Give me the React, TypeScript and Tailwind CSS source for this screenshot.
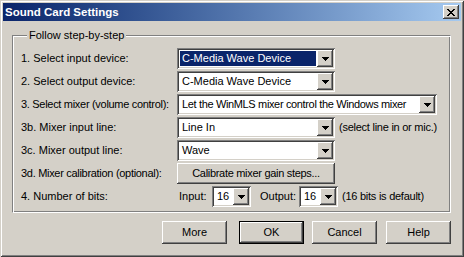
import React from 'react';

const raised =
  'shadow-[inset_-1px_-1px_#404040,inset_1px_1px_#ffffff,inset_-2px_-2px_#808080,inset_2px_2px_#d4d0c8]';
const sunken =
  'shadow-[inset_1px_1px_#808080,inset_-1px_-1px_#ffffff,inset_2px_2px_#404040,inset_-2px_-2px_#d4d0c8]';

const DownArrow = () => (
  <svg width="7" height="4" viewBox="0 0 7 4" shapeRendering="crispEdges">
    <rect x="0" y="0" width="7" height="1" fill="#000" />
    <rect x="1" y="1" width="5" height="1" fill="#000" />
    <rect x="2" y="2" width="3" height="1" fill="#000" />
    <rect x="3" y="3" width="1" height="1" fill="#000" />
  </svg>
);

const CloseGlyph = () => {
  const rows = ['11000011', '01100110', '00111100', '00011000', '00111100', '01100110', '11000011'];
  return (
    <svg width="8" height="7" viewBox="0 0 8 7" shapeRendering="crispEdges">
      {rows.map((r, y) =>
        r.split('').map((c, x) => (c === '1' ? <rect key={`${x}-${y}`} x={x} y={y} width="1" height="1" fill="#000" /> : null))
      )}
    </svg>
  );
};

interface ComboProps {
  value: string;
  width: string;
  selected?: boolean;
  tight?: boolean;
}

const Combo: React.FC<ComboProps> = ({ value, width, selected, tight }) => (
  <div className={`${width} h-[21px] bg-white p-[2px] flex ${sunken}`}>
    <div className="flex-1 min-w-0 p-[1px] flex">
      <span
        className={`flex-1 flex items-center pl-[2px] whitespace-nowrap overflow-hidden ${tight ? 'tracking-[-0.35px]' : ''} ${
          selected ? 'bg-[#0a246a] text-white' : 'text-black'
        }`}
      >
        {value}
      </span>
    </div>
    <div className={`w-[16px] h-[17px] bg-[#d4d0c8] flex items-center justify-center pl-[1px] ${raised}`}>
      <DownArrow />
    </div>
  </div>
);

const Row: React.FC<{ label: string; tight?: boolean; children: React.ReactNode }> = ({ label, tight, children }) => (
  <div className="h-[21px] flex items-center">
    <span className={`w-[156px] whitespace-nowrap ${tight ? 'tracking-[-0.3px]' : ''}`}>{label}</span>
    {children}
  </div>
);

const Button: React.FC<{ label: string; isDefault?: boolean; className?: string }> = ({ label, isDefault, className = '' }) =>
  isDefault ? (
    <div className={`w-[65px] h-[23px] border border-black ${className}`}>
      <div className={`w-full h-full flex items-center justify-center ${raised}`}>{label}</div>
    </div>
  ) : (
    <div className={`w-[65px] h-[23px] flex items-center justify-center ${raised} ${className}`}>{label}</div>
  );

export default function App() {
  return (
    <div className="w-[464px] h-[257px] bg-[#d4d0c8] p-[3px] flex flex-col font-['Liberation_Sans',Arial,sans-serif] text-[11px] leading-[13px] text-black shadow-[inset_1px_1px_#d4d0c8,inset_-1px_-1px_#404040,inset_2px_2px_#ffffff,inset_-2px_-2px_#808080]">
      <div className="h-[18px] flex items-center px-[2px] bg-linear-to-r from-[#0a246a] to-[#a6caf0]">
        <span className="flex-1 text-white font-bold text-[11.5px]">Sound Card Settings</span>
        <div className={`w-[16px] h-[14px] bg-[#d4d0c8] flex items-center justify-center ${raised}`}>
          <CloseGlyph />
        </div>
      </div>

      <div className="flex-1 flex flex-col pl-[9px] pr-[10px]">
        <fieldset className="mt-[8px] border border-t-[#808080] border-l-[#808080] border-b-white border-r-white shadow-[inset_1px_1px_#ffffff,inset_-1px_-1px_#808080] pl-[8px] pt-[6px] pb-[5px]">
          <legend className="ml-[6px] px-[2px] bg-[#d4d0c8]">Follow step-by-step</legend>
          <div className="flex flex-col gap-[2px]">
            <Row label="1. Select input device:">
              <Combo value="C-Media Wave Device" width="w-[158px]" selected />
            </Row>
            <Row label="2. Select output device:">
              <Combo value="C-Media Wave Device" width="w-[158px]" />
            </Row>
            <Row label="3. Select mixer (volume control):" tight>
              <Combo value="Let the WinMLS mixer control the Windows mixer" width="w-[260px]" tight />
            </Row>
            <Row label="3b. Mixer input line:">
              <Combo value="Line In" width="w-[158px]" />
              <span className="ml-[4px] whitespace-nowrap tracking-[-0.25px]">(select line in or mic.)</span>
            </Row>
            <Row label="3c. Mixer output line:">
              <Combo value="Wave" width="w-[158px]" />
            </Row>
            <Row label="3d. Mixer calibration (optional):" tight>
              <div className={`w-[158px] h-[21px] flex items-center justify-center tracking-[-0.3px] ${raised}`}>
                Calibrate mixer gain steps...
              </div>
            </Row>
            <Row label="4. Number of bits:">
              <span className="ml-[2px] w-[33px]">Input:</span>
              <Combo value="16" width="w-[39px]" />
              <span className="ml-[9px] w-[39px]">Output:</span>
              <Combo value="16" width="w-[39px]" />
              <span className="ml-[4px] whitespace-nowrap tracking-[-0.25px]">(16 bits is default)</span>
            </Row>
          </div>
        </fieldset>

        <div className="mt-[8px] flex justify-end">
          <Button label="More" />
          <Button label="OK" isDefault className="ml-[12px]" />
          <Button label="Cancel" className="ml-[8px]" />
          <Button label="Help" className="ml-[9px]" />
        </div>
      </div>
    </div>
  );
}
